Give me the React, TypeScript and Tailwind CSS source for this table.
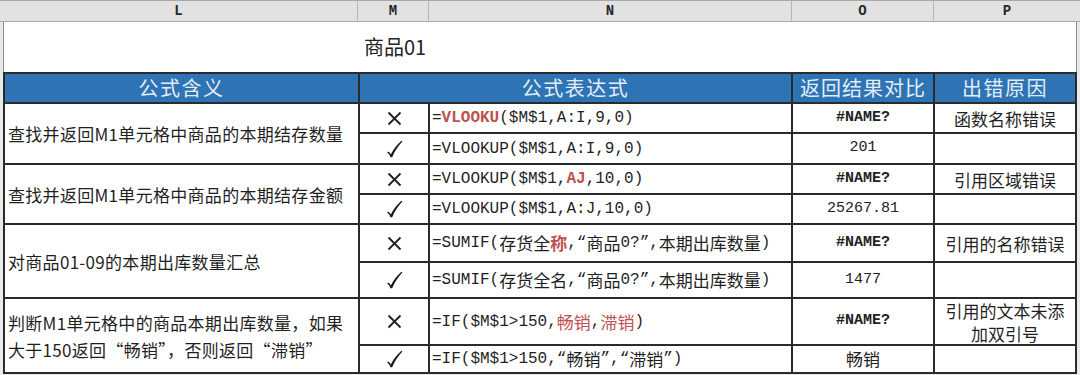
import React from "react";

type Seg = { t: string; red?: boolean; bold?: boolean };

// split CJK runs so they can be sized separately from the mono latin text
function renderText(text: string, extra: string, key: string) {
  const parts = text.split(/([\u3400-\u9fff\uff0c]+)/);
  return parts.map((p, i) =>
    /[\u3400-\u9fff]/.test(p) ? (
      <span key={key + i} className={`font-['Noto_Sans_CJK_SC',sans-serif] text-[17px] ${extra}`}>
        {p}
      </span>
    ) : (
      <span key={key + i} className={extra}>
        {p}
      </span>
    )
  );
}

function Formula({ segs }: { segs: Seg[] }) {
  return (
    <div className="flex items-center h-full pl-[2px] whitespace-nowrap font-['Liberation_Mono','Noto_Sans_CJK_SC',monospace] text-[16px] text-[#1f1f1f]">
      {segs.map((s, i) =>
        renderText(
          s.t,
          `${s.red ? "text-[#c0504d]" : ""} ${s.bold ? "font-bold" : ""}`,
          "s" + i
        )
      )}
    </div>
  );
}

function Cross() {
  return (
    <svg width="15" height="15" viewBox="0 0 15 15">
      <path d="M1.5 1.5 L13.5 13.5 M13.5 1.5 L1.5 13.5" stroke="#1f1f1f" strokeWidth="1.8" fill="none" />
    </svg>
  );
}

function Check() {
  return (
    <svg width="17" height="18" viewBox="0 0 17 18">
      <path
        d="M1.4 12 C2.6 11.2 3.6 12.2 4.8 14.4 C7.4 9.6 10.6 4.8 15.4 0.8 L16.4 1.6 C12 6.2 9 10.8 6.2 17.2 L4.4 17.2 C3.6 15 2.6 13.4 1.4 12.8 Z"
        fill="#1a1a1a"
      />
    </svg>
  );
}

const rows: {
  mark: "x" | "v";
  segs: Seg[];
  result: string;
  resultBold?: boolean;
  reason?: React.ReactNode;
}[] = [
  { mark: "x", segs: [{ t: "=" }, { t: "VLOOKU", red: true, bold: true }, { t: "($M$1,A:I,9,0)" }], result: "#NAME?", resultBold: true, reason: "函数名称错误" },
  { mark: "v", segs: [{ t: "=VLOOKUP($M$1,A:I,9,0)" }], result: "201" },
  { mark: "x", segs: [{ t: "=VLOOKUP($M$1," }, { t: "AJ", red: true, bold: true }, { t: ",10,0)" }], result: "#NAME?", resultBold: true, reason: "引用区域错误" },
  { mark: "v", segs: [{ t: "=VLOOKUP($M$1,A:J,10,0)" }], result: "25267.81" },
  { mark: "x", segs: [{ t: "=SUMIF(存货全" }, { t: "称", red: true, bold: true }, { t: ",“商品0?”,本期出库数量)" }], result: "#NAME?", resultBold: true, reason: "引用的名称错误" },
  { mark: "v", segs: [{ t: "=SUMIF(存货全名,“商品0?”,本期出库数量)" }], result: "1477" },
  { mark: "x", segs: [{ t: "=IF($M$1>150," }, { t: "畅销", red: true }, { t: "," }, { t: "滞销", red: true }, { t: ")" }], result: "#NAME?", resultBold: true, reason: <>引用的文本未添<br />加双引号</> },
  { mark: "v", segs: [{ t: "=IF($M$1>150,“畅销”,“滞销”)" }], result: "畅销" },
];

const meanings: React.ReactNode[] = [
  "查找并返回M1单元格中商品的本期结存数量",
  "查找并返回M1单元格中商品的本期结存金额",
  "对商品01-09的本期出库数量汇总",
  <>判断M1单元格中的商品本期出库数量，如果<br />大于150返回“畅销”，否则返回“滞销”</>,
];

export default function App() {
  const cjk = "font-['Noto_Sans_CJK_SC',sans-serif]";
  return (
    <div className="w-[1080px] h-[375px] overflow-hidden bg-[#e9e9e9] text-[#1f1f1f]">
      {/* column letters */}
      <div className="grid grid-cols-[358px_71px_363px_142px_1fr] h-[22px] bg-[#e2e2e2] border-t border-b border-[#a9a9a9] font-['Liberation_Mono',monospace] font-bold text-[14px] text-[#2a2a2a]">
        {["L", "M", "N", "O", "P"].map((c) => (
          <div key={c} className="flex items-center justify-center border-r border-[#b5b5b5] last:border-r-0">
            {c}
          </div>
        ))}
      </div>

      <div className="px-[3px]">
        {/* title row */}
        <div className={`h-[50px] bg-white border-l border-r border-[#8a8a8a] flex items-center pl-[360px] text-[20px] text-[#222] ${cjk}`}>
          商品01
        </div>

        {/* table */}
        <div className="grid grid-cols-[353px_68px_361px_140px_140px] grid-rows-[28px_28px_29px_28px_28px_36px_34px_45px_26px] gap-[2px] p-[2px] bg-[#2b2b2b]">
          <div className={`bg-[#2e74b5] flex items-center justify-center text-[20px] tracking-[1.5px] text-[#e4edf7] ${cjk}`}>公式含义</div>
          <div className={`col-span-2 bg-[#2e74b5] flex items-center justify-center text-[20px] tracking-[1.5px] text-[#e4edf7] ${cjk}`}>公式表达式</div>
          <div className={`bg-[#2e74b5] flex items-center justify-center text-[20px] tracking-[1px] text-[#e4edf7] ${cjk}`}>返回结果对比</div>
          <div className={`bg-[#2e74b5] flex items-center justify-center text-[20px] tracking-[1.5px] text-[#e4edf7] ${cjk}`}>出错原因</div>

          {rows.map((r, i) => (
            <React.Fragment key={i}>
              {i % 2 === 0 && (
                <div className={`row-span-2 bg-white flex items-center pl-[3px] text-[17px] leading-[27px] tracking-[0.3px] whitespace-nowrap ${cjk}`}>
                  <div>{meanings[i / 2]}</div>
                </div>
              )}
              <div className="bg-white flex items-center justify-center">
                {r.mark === "x" ? <Cross /> : <Check />}
              </div>
              <div className="bg-white">
                <Formula segs={r.segs} />
              </div>
              <div className="bg-white flex items-center justify-center font-['Liberation_Mono','Noto_Sans_CJK_SC',monospace] text-[15px] text-[#222]">
                {r.result === "畅销" ? (
                  <span className={`${cjk} text-[17px]`}>{r.result}</span>
                ) : (
                  <span className={r.resultBold ? "font-bold" : ""}>{r.result}</span>
                )}
              </div>
              <div className={`bg-white flex items-center justify-center text-center text-[17px] leading-[23px] ${cjk}`}>
                {r.reason ?? ""}
              </div>
            </React.Fragment>
          ))}
        </div>
      </div>
    </div>
  );
}
